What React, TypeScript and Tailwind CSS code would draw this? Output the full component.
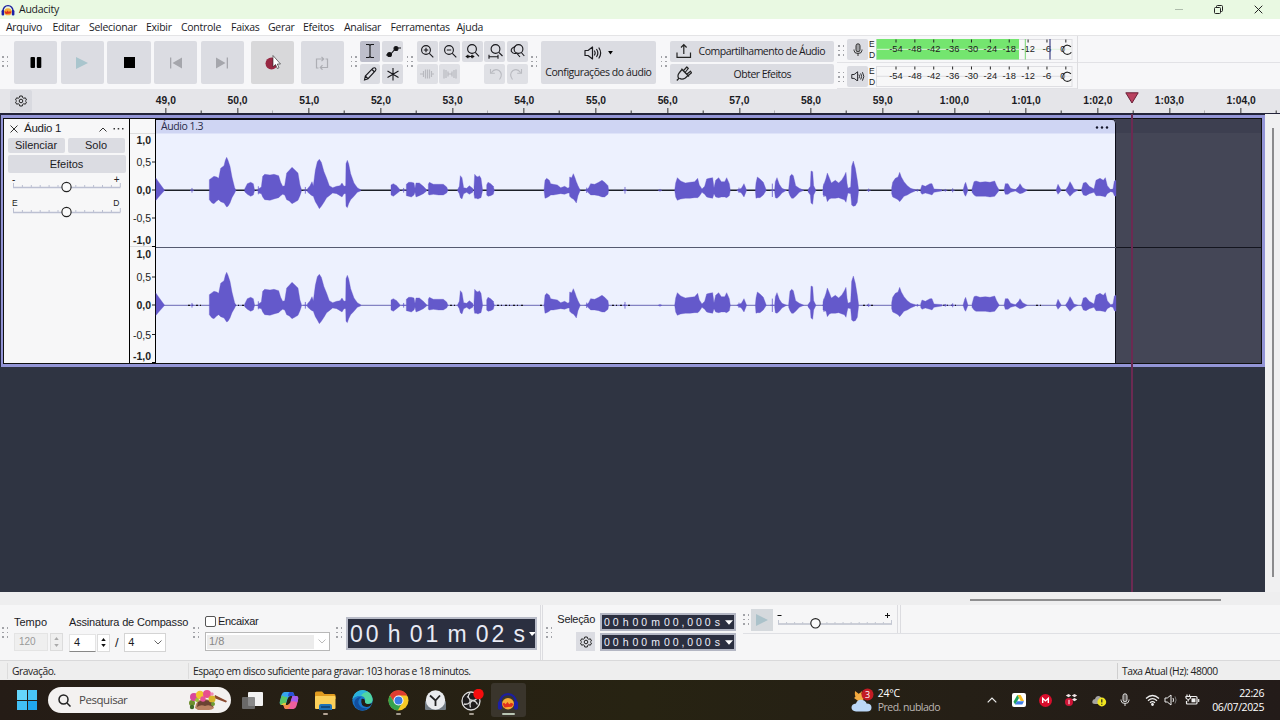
import React from "react";

type Pt = [number, number, number];
type Chunk = { origin: number; parts: Pt[][]; ticks: [number, number][] };

// Waveform envelopes: [position, peak above zero, peak below zero] in thirds of a pixel.
const CHUNKS: Chunk[] = [
  {
    origin: 150,
    parts: [
      [[18, 36, 30], [28, 22, 18], [44, 0, 0]],
      [[178, 32, 28], [186, 38, 38], [192, 42, 40], [200, 40, 32], [206, 36, 28], [212, 66, 34], [222, 74, 38], [226, 90, 44], [230, 99, 50], [234, 90, 48], [240, 72, 38], [246, 40, 22], [254, 8, 8], [258, 0, 0]],
      [[284, 4, 4], [292, 20, 12], [302, 24, 18], [310, 20, 14], [314, 0, 0]],
      [[325, 4, 8], [334, 10, 10], [338, 42, 20], [344, 48, 28], [360, 46, 30], [372, 48, 26], [386, 44, 22], [392, 24, 16], [398, 12, 12], [404, 14, 14], [410, 52, 28], [418, 60, 32], [426, 69, 40], [434, 62, 36], [444, 52, 30], [450, 16, 16], [454, 4, 4]],
      [[472, 4, 4], [480, 14, 12], [486, 26, 16], [490, 14, 18], [496, 60, 34], [502, 86, 44], [508, 93, 55], [514, 84, 48], [522, 56, 36], [530, 36, 22], [538, 14, 16], [548, 8, 8], [560, 12, 10], [570, 14, 16], [576, 22, 20], [582, 12, 10], [587, 14, 10], [588, 80, 48], [592, 90, 52], [596, 80, 40], [602, 50, 28], [612, 22, 18], [622, 8, 6], [632, 2, 2]],
      [[723, 16, 14], [730, 20, 18], [740, 14, 10], [750, 2, 2]],
      [[769, 18, 16], [776, 24, 18], [784, 24, 20], [792, 22, 14], [795, 6, 6], [798, 22, 20], [808, 22, 16], [820, 12, 10], [830, 2, 2]],
      [[835, 18, 12], [838, 24, 14], [850, 18, 12], [866, 18, 14], [880, 18, 14], [890, 10, 8], [894, 0, 0]],
      [[922, 0, 0], [928, 12, 10], [931, 44, 22], [936, 38, 26], [941, 8, 10], [950, 6, 6], [958, 14, 12], [968, 6, 6], [970, 0, 0]],
      [[972, 10, 12], [974, 48, 24], [979, 42, 24], [984, 40, 26], [988, 44, 24], [993, 36, 22], [998, 0, 0]],
      [[1010, 16, 14], [1014, 24, 18], [1022, 20, 16], [1030, 12, 12], [1033, 0, 0]],
    ],
    ticks: [[126, 7], [325, 12], [466, 10], [761, 7]],
  },
  {
    origin: 530,
    parts: [
      [[42, 0, 0], [45, 30, 24], [50, 36, 22], [58, 30, 18], [62, 20, 14], [70, 18, 14], [82, 16, 12], [92, 8, 10], [104, 12, 12], [114, 6, 8], [118, 10, 8], [119, 40, 18], [125, 38, 24], [130, 50, 26], [135, 38, 32], [139, 26, 38], [144, 14, 16], [151, 0, 0]],
      [[168, 0, 0], [176, 8, 8], [182, 20, 14], [194, 18, 14], [206, 24, 16], [216, 30, 20], [224, 24, 20], [234, 14, 12], [236, 0, 0]],
      [[434, 0, 0], [437, 22, 20], [442, 38, 30], [452, 28, 26], [466, 22, 24], [480, 24, 24], [494, 26, 22], [503, 36, 22], [508, 16, 18], [516, 4, 6], [524, 12, 12], [530, 34, 20], [538, 36, 22], [548, 38, 24], [552, 8, 10], [557, 30, 20], [566, 38, 22], [574, 26, 20], [584, 26, 20], [590, 38, 22], [598, 20, 16], [601, 0, 0]],
      [[620, 0, 0], [634, 6, 8], [642, 20, 20], [650, 0, 0]],
      [[676, 0, 0], [678, 22, 24], [682, 40, 22], [690, 34, 22], [700, 24, 14], [709, 0, 0]],
      [[734, 4, 6], [736, 26, 22], [741, 38, 24], [748, 18, 18], [756, 6, 8], [770, 0, 0]],
      [[776, 4, 6], [780, 42, 16], [785, 48, 24], [790, 44, 24], [797, 14, 18], [808, 6, 6], [822, 0, 0]],
      [[834, 2, 4], [841, 12, 14], [843, 58, 38], [848, 56, 42], [851, 14, 14], [858, 0, 0]],
      [[879, 10, 14], [888, 36, 18], [892, 52, 34], [898, 38, 26], [904, 22, 24], [916, 30, 24], [926, 22, 22], [936, 32, 26], [943, 44, 28], [948, 54, 36], [951, 22, 20], [954, 6, 8], [962, 10, 10], [965, 72, 44], [970, 88, 48], [976, 66, 46], [982, 30, 36], [986, 0, 0]],
    ],
    ticks: [[285, 10], [170, 8], [390, 4], [627, 8], [727, 20], [882, 20], [1016, 5]],
  },
  {
    origin: 880,
    parts: [
      [[35, 8, 10], [38, 24, 20], [46, 36, 24], [54, 40, 28], [59, 54, 34], [64, 40, 28], [72, 26, 18], [82, 14, 14], [92, 6, 8], [106, 2, 2]],
      [[122, 4, 6], [126, 16, 12], [136, 12, 8], [150, 20, 12], [156, 20, 14], [162, 4, 6], [186, 2, 2]],
      [[249, 0, 0], [254, 18, 14], [257, 24, 18], [264, 0, 0]],
      [[276, 4, 6], [282, 26, 14], [288, 28, 18], [300, 24, 18], [316, 26, 18], [330, 24, 20], [344, 28, 18], [350, 14, 10], [358, 0, 0]],
      [[372, 0, 0], [376, 20, 12], [384, 20, 12], [392, 6, 6], [406, 2, 2], [416, 12, 8], [420, 20, 10], [428, 8, 8], [442, 0, 0]],
      [[528, 0, 0], [534, 18, 12], [544, 0, 0]],
      [[556, 0, 0], [564, 12, 10], [570, 26, 18], [576, 16, 12], [582, 4, 6], [594, 0, 0]],
      [[604, 0, 0], [610, 22, 14], [618, 24, 16], [628, 12, 10], [642, 4, 6], [648, 30, 16], [660, 36, 16], [670, 30, 18], [676, 38, 20], [682, 14, 10], [692, 2, 4], [699, 4, 6], [703, 28, 16], [708, 30, 18]],
    ],
    ticks: [[218, 6], [196, 4], [112, 4]],
  },
];

const GRIP = ["a", "b", "c"];
const TIMES = ["49,0", "50,0", "51,0", "52,0", "53,0", "54,0", "55,0", "56,0", "57,0", "58,0", "59,0", "1:00,0", "1:01,0", "1:02,0", "1:03,0", "1:04,0"];
const DB = [-54, -48, -42, -36, -30, -24, -18, -12, -6, 0];

function Grip({ className = "" }: { className?: string }) {
  return (
    <div className={`flex w-[6px] shrink-0 flex-col gap-[3px] ${className}`}>
      {GRIP.map((k) => (
        <div key={k} className="flex justify-between">
          <i className="size-[1.5px] bg-[#a2a3a8]" />
          <i className="size-[1.5px] bg-[#a2a3a8]" />
        </div>
      ))}
    </div>
  );
}

function Big({ children, className = "bg-[#dbdce2]" }: { children: React.ReactNode; className?: string }) {
  return <div className={`flex h-[43px] w-[43.4px] shrink-0 items-center justify-center rounded-[2px] ${className}`}>{children}</div>;
}

function Tool({ children, active, off }: { children?: React.ReactNode; active?: boolean; off?: boolean }) {
  return (
    <div className={`flex h-[20.5px] w-[20.7px] items-center justify-center rounded-[2px] ${active ? "bg-[#bdbecb]" : off ? "bg-[#dfe0e5]" : "bg-[#dbdce2]"}`}>
      <svg width="20" height="20" viewBox="0 0 20 20" fill="none" stroke={off ? "#b9bac0" : "#17171b"} strokeWidth="1.1">{children}</svg>
    </div>
  );
}

function Gear({ size = 12 }: { size?: number }) {
  return (
    <svg width={size} height={size} viewBox="0 0 24 24" fill="none" stroke="#222" strokeWidth="2" strokeLinejoin="round">
      <path d="M9.500 2h5l.8 3.200 2.200 1.300 3.200-.9 2.300 4.300L20.700 12l2.300 2.200-2.300 4.200-3.200-.9-2.200 1.300-.8 3.200h-5l-.8-3.200-2.200-1.300-3.200.9L1 14.200 3.300 12 1 9.900l2.300-4.300 3.200.9 2.200-1.300z" />
      <circle cx="12" cy="12" r="3.600" />
    </svg>
  );
}

function Speaker({ w, stroke = "#1c1c20" }: { w: number; stroke?: string }) {
  return (
    <svg width={w} height={(w * 14) / 18} viewBox="0 0 18 14" fill="none" stroke={stroke} strokeWidth="1.200" strokeLinejoin="round">
      <path d="M1 4.500h3L8.500 1v12L4 9.500H1z" />
      <path d="M10.500 5q1.300 2 0 4M12.700 3.500q2.300 3.500 0 7M15 2q3.300 5 0 10" strokeLinecap="round" />
    </svg>
  );
}

function Mic({ stroke = "#333" }: { stroke?: string }) {
  return (
    <svg width="10" height="14" viewBox="0 0 10 14" fill="none" stroke={stroke} strokeWidth="1">
      <rect x="3" y=".8" width="4" height="8" rx="2" fill={stroke} fillOpacity=".35" />
      <path d="M1 6.500v.8q0 3.200 4 3.200t4-3.200v-.8M5 10.500V13" />
    </svg>
  );
}

function Meter({ live }: { live?: boolean }) {
  return (
    <svg width="200" height="22" viewBox="874 0 200 22" className="shrink-0 font-['Liberation_Sans',sans-serif]">
      <rect x="876.500" y=".5" width="195.500" height="20" fill="#f7f7f8" stroke="#dedee2" />
      {live && <rect x="876.500" y="0" width="142.500" height="20.500" fill="#74e56f" />}
      <path d="M877 10.300H1071" stroke={live ? "#dff3de" : "#dcdce0"} />
      {DB.map((d, i) => {
        const x = 896 + i * 18.87;
        return (
          <g key={d}>
            <path d={`M${x} .5v3`} stroke="#222" />
            <text x={x - (d === 0 ? 3 : 0)} y="13.200" fontSize="9.800" textAnchor="middle" fill="#1c1c1c" textLength={d === 0 ? 5 : d === -6 ? 9 : 13.500} lengthAdjust="spacingAndGlyphs">{d}</text>
          </g>
        );
      })}
      {live && <path d="M1025.300 0v20.500" stroke="#74d572" />}
      {live && <path d="M1050 0v20.500" stroke="#50528f" strokeWidth="1.300" />}
      <path d="M1070.900 7.800a4.600 4.600 0 1 0 .4 5.400" fill="#f7f7f8" fillOpacity=".4" stroke="#222" strokeWidth="1.100" />
    </svg>
  );
}

function Channel({ y, dark }: { y: number; dark?: boolean }) {
  return (
    <g>
      <path d={`M156 ${y}H1116`} stroke={dark ? "#1c2028" : "#6968b4"} strokeWidth={dark ? 1.4 : 1} />
      {!dark && <path d={`M188 ${y}h14M234 ${y}h12M450 ${y}h8M497 ${y}h28M540 ${y}h6M612 ${y}h20M863 ${y}h10M943 ${y}h16M1036 ${y}h6`} stroke="#15151d" strokeWidth="1.300" strokeDasharray="2 2 1 3" />}
      {CHUNKS.map((c) => (
        <g key={c.origin} transform={`translate(${c.origin} ${y}) scale(0.33333)`} fill="#6459cb" stroke="#6459cb">
          {c.parts.map((p) => (
            <path key={p[0][0]} strokeWidth="1" d={`M${p.map(([x, u]) => `${x} ${-u}`).join("L")}L${[...p].reverse().map(([x, , d]) => `${x} ${d}`).join("L")}Z`} />
          ))}
          {c.ticks.map(([x, h]) => (
            <path key={x} strokeWidth="2.500" d={`M${x} ${-h}V${h}M${x - 6} 0h12`} />
          ))}
        </g>
      ))}
    </g>
  );
}

const AXIS: [string, number, boolean][] = [
  ["1,0", 140, true], ["0,5", 162.5, false], ["0,0", 190.5, true], ["-0,5", 218.5, false], ["-1,0", 240, true],
  ["1,0", 254.5, true], ["0,5", 277.5, false], ["0,0", 305.5, true], ["-0,5", 335, false], ["-1,0", 356.5, true],
];

function PanelSlider({ l, r, small }: { l: string; r: string; small?: boolean }) {
  return (
    <svg width="125" height="25" viewBox="4 0 125 25" className="block font-['Liberation_Sans',sans-serif]">
      <text x="12" y={small ? 7.2 : 8.5} fontSize={small ? 8.5 : 10} fill="#222">{l}</text>
      <text x="119.500" y={small ? 7.2 : 8.5} fontSize={small ? 8.5 : 10} textAnchor="end" fill="#222">{r}</text>
      <path d="M13 13.500H120.500" stroke="#bcc0d2" strokeWidth="1.300" />
      {[0, 1, 2, 3, 4, 5, 6, 7, 8, 9, 10, 11, 12].map((i) => (
        <path key={i} d={`M${13.5 + i * 8.9} 13V${i % 12 === 0 ? 9 : 11}`} stroke="#bcc0d2" />
      ))}
      <circle cx="66.500" cy="13" r="4.600" fill="#fafafa" stroke="#222" strokeWidth="1.100" />
    </svg>
  );
}

function TimeField() {
  return (
    <div className="flex h-[18px] w-[136px] items-center justify-between border-2 border-[#b4b7c4] bg-[#2b2f40] pr-[1px] pl-[2px] text-[10.500px] leading-none whitespace-pre text-[#eef0fa]">
      <span className="flex w-[116px] justify-between">
        {"00 h 00 m 00,000 s".split(" ").map((t, i) => (
          <span key={i} className="tracking-[2.900px] last:tracking-normal">{t}</span>
        ))}
      </span>
      <svg width="8" height="5" viewBox="0 0 8 5"><path d="M0 .3h8L4 4.700z" fill="#fff" /></svg>
    </div>
  );
}

function Headphones({ w }: { w: number }) {
  return (
    <svg width={w} height={w} viewBox="0 0 24 24" fill="none">
      <path d="M3.500 15C2 1 22 1 20.500 15" stroke="#1c1f9e" strokeWidth="2.400" />
      <rect x="1" y="12" width="4.500" height="9.500" rx="2" fill="#1d20a6" />
      <rect x="18.500" y="12" width="4.500" height="9.500" rx="2" fill="#1d20a6" />
      <ellipse cx="12" cy="15" rx="6.500" ry="6.200" fill="#f5ab35" />
      <path d="M5.800 15l2-1 1.600 1.500 2-2.500 2 2.500 1.800-1.500 3 1.200-2 3-8 .8z" fill="#e0301e" />
    </svg>
  );
}

function Spin({ off }: { off?: boolean }) {
  return (
    <div className={`flex h-[18px] w-[12.5px] flex-col items-center justify-evenly border border-[#dcdcdc] ${off ? "bg-[#efefef]" : "bg-white"}`}>
      <svg width="5" height="3" viewBox="0 0 6 4"><path d="M0 4h6L3 0z" fill={off ? "#aaa" : "#111"} /></svg>
      <svg width="5" height="3" viewBox="0 0 6 4"><path d="M0 0h6L3 4z" fill={off ? "#aaa" : "#111"} /></svg>
    </div>
  );
}

function Chevron({ color = "#666" }: { color?: string }) {
  return <svg width="8" height="5" viewBox="0 0 8 5" fill="none" stroke={color}><path d="M.5.5L4 4 7.500.5" /></svg>;
}

function TaskCell({ children, active, dot }: { children: React.ReactNode; active?: boolean; dot?: string }) {
  return (
    <div className={`flex h-[34px] w-[34.600px] shrink-0 flex-col items-center rounded-[3px] pt-[7px] ${active ? "bg-[#3a352c]" : ""}`}>
      <div className="flex h-[21px] items-center">{children}</div>
      {dot && <i className={`mt-[2px] h-[2px] rounded-full ${dot}`} />}
    </div>
  );
}

const MENU: [string, string][] = [
  ["Arquivo", "w-[46.500px]"], ["Editar", "w-[36.500px]"], ["Selecionar", "w-[57px]"], ["Exibir", "w-[35px]"], ["Controle", "w-[50px]"], ["Faixas", "w-[37px]"],
  ["Gerar", "w-[35px]"], ["Efeitos", "w-[41px]"], ["Analisar", "w-[46.500px]"], ["Ferramentas", "w-[66px]"], ["Ajuda", "w-[40px]"],
];

export default function App() {
  return (
    <div className="flex h-[720px] w-[1280px] flex-col overflow-hidden bg-[#f5f5f6] font-['Open_Sans','Noto_Sans',sans-serif] text-[11px] leading-none text-[#1b1b1f]">
      <header className="flex h-[19px] shrink-0 items-center bg-[#e9f9e2] pl-[1px]">
        <Headphones w={14} />
        <span className="ml-[4px] text-[10.500px] tracking-[-0.250px]">Audacity</span>
        <div className="mr-[17px] ml-auto flex items-center">
          <i className="mr-[31px] h-px w-[8px] bg-[#aebcab]" />
          <svg className="mr-[31px]" width="9" height="9" viewBox="0 0 9 9" fill="none" stroke="#222"><rect x=".5" y="2.500" width="6" height="6" rx="1" /><path d="M2.500 2.500V1.500q0-1 1-1h4q1 0 1 1v4q0 1-1 1h-1" /></svg>
          <svg width="9" height="9" viewBox="0 0 9 9" stroke="#222"><path d="M.7.7l7.600 7.600M8.300.7L.7 8.300" /></svg>
        </div>
      </header>

      <nav className="flex h-[16px] shrink-0 items-center bg-white pt-px pl-[6px] text-[10.500px] tracking-[-0.280px]">
        {MENU.map(([t, w]) => <span key={t} className={`shrink-0 whitespace-nowrap ${w}`}>{t}</span>)}
      </nav>

      <section className="flex h-[54px] shrink-0 border-t border-[#e4e4e6] bg-[#f7f7f9]">
        <div className="flex w-[834px] shrink-0 items-start pt-[5px] pl-[2px]">
          <Grip className="mt-[15px] mr-[6px]" />
          <Big><svg width="12" height="11" viewBox="0 0 12 11"><rect x=".5" width="4.500" height="11" rx="1" /><rect x="6.800" width="4.500" height="11" rx="1" /></svg></Big>
          <Big className="ml-[3.300px] bg-[#dbdce2]"><svg width="12" height="12" viewBox="0 0 12 12"><path d="M0 0l12 6-12 6z" fill="#a9c5cd" /></svg></Big>
          <Big className="ml-[3.300px] bg-[#dbdce2]"><i className="size-[11px] bg-black" /></Big>
          <Big className="ml-[3.300px] bg-[#dbdce2]"><svg width="12" height="12" viewBox="0 0 12 12" fill="#a5a6ac"><path d="M0 .5h1.300v11H0zM12 .5v11L2.500 6z" /></svg></Big>
          <Big className="ml-[3.300px] bg-[#dbdce2]"><svg width="12" height="12" viewBox="0 0 12 12" fill="#a5a6ac"><path d="M10.700.5H12v11h-1.300zM0 .5v11L9.500 6z" /></svg></Big>
          <Big className="ml-[6.600px] bg-[#d8d8da]">
            <svg width="18" height="16" viewBox="0 0 18 16" className="ml-[3px]"><circle cx="6.500" cy="8.500" r="6" fill="#972842" /><path d="M8 .5v11.300l2.500-2.300 1.800 4 1.700-.8-1.700-3.700h3.200z" fill="#fff" stroke="#222" strokeWidth=".6" /></svg>
          </Big>
          <Big className="ml-[6.600px] bg-[#dbdce2]">
            <svg width="14" height="14" viewBox="0 0 14 14" fill="none" stroke="#adaeb4" strokeWidth="1.200"><path d="M3.500 12H1.500V3h7M6.500.8L8.700 3 6.500 5.200M10.500 3h2v8.500h-7M7.500 9.200l-2.200 2.300 2.200 2.200" /></svg>
          </Big>
          <Grip className="mt-[15px] ml-[6.500px]" />
          <div className="ml-[3px] grid grid-cols-2 gap-[2px]">
            <Tool active><path d="M6 3.500h3l1 1 1-1h3M6 16.500h3l1-1 1 1h3M10 4.500v11" /></Tool>
            <Tool><path d="M3 14h4l6-7h5" /><circle cx="6.500" cy="13.500" r="2" fill="#111" /><circle cx="13" cy="7.500" r="2" fill="#111" /></Tool>
            <Tool><path d="M4.500 16l.8-4L13 4.200q1.300-1 2.400 0 1.100 1.200.1 2.500L8 14.700zM12 5.500l2.500 2.500M5.300 12L8 14.700" /></Tool>
            <Tool><path d="M10 4v12.500M4.500 7l11 6.500M15.500 7l-11 6.500" /></Tool>
          </div>
          <Grip className="mt-[15px] ml-[4px]" />
          <div className="ml-[4px] grid grid-cols-5 gap-x-[1.800px] gap-y-[2px]">
            <Tool><circle cx="9" cy="9" r="4.400" /><path d="M12.300 12.300l4 4M6.800 9h4.400M9 6.800v4.400" /></Tool>
            <Tool><circle cx="9" cy="9" r="4.400" /><path d="M12.300 12.300l4 4M6.800 9h4.400" /></Tool>
            <Tool><circle cx="10" cy="8" r="4.400" /><path d="M13.300 11.300l3.700 4M4 15.500h8" /><path d="M3.500 15.500l2.500-1.700v3.400zM8 15.500l-1.500-1.700v3.400zM8.500 15.500l1.500-1.700v3.400zM12.500 15.500l-2.300-1.700v3.400z" fill="#111" strokeWidth=".2" /></Tool>
            <Tool><circle cx="10.500" cy="8" r="4.400" /><path d="M13.800 11.300l3.700 3.700M4 15.800h9M4 13.800v4M13 13.800v4" /></Tool>
            <Tool><circle cx="11.500" cy="8" r="4.400" /><path d="M14.300 11.500l3 3.500M8.500 5.500q-5 1.500-4.200 4.800 1.700 3.200 5.500 1.700M10 12.500l3 3.500" /></Tool>
            <Tool off><path d="M3 10h3M14 10h3M6.500 7v6M8.500 5.500v9M10.500 5.500v9M12.500 5.500v9M14.500 7v6" strokeWidth="1.200" /></Tool>
            <Tool off><path d="M4 5.500v9M6 6v8M8 7.500v5M8 10h4M12 7.500v5M14 6v8M16 5.500v9" strokeWidth="1.200" /></Tool>
            <span />
            <Tool off><path d="M6.500 8.500q3-4.500 7.500-2 4.500 3.500.5 9M5.500 5v4.300h4.300" /></Tool>
            <Tool off><path d="M13.500 8.500q-3-4.500-7.500-2-4.500 3.500-.5 9M14.500 5v4.300h-4.300" /></Tool>
          </div>
          <Grip className="mt-[15px] ml-[3.500px]" />
          <div className="ml-[3.500px] flex h-[43px] w-[115.500px] shrink-0 flex-col items-center rounded-[2px] bg-[#dbdce2] pt-[5px]">
            <div className="flex items-center gap-[6px]"><Speaker w={18} /><svg width="5" height="4" viewBox="0 0 6 5"><path d="M0 0h6L3 4.500z" /></svg></div>
            <span className="mt-[7px] text-[10.500px] tracking-[-0.440px] whitespace-nowrap">Configurações do áudio</span>
          </div>
          <Grip className="mt-[15px] ml-[4.500px]" />
          <div className="ml-[3px] flex flex-col gap-[2px]">
            <div className="flex h-[20.500px] w-[164px] items-center rounded-[2px] bg-[#dbdce2] pl-[6px]">
              <svg className="shrink-0" width="16" height="16" viewBox="0 0 16 16" fill="none" stroke="#222" strokeWidth="1.200"><path d="M1 9.500v4.800h13.500V9.500M7.800 11V2M5 4.500L7.800 1.700l2.800 2.800" /></svg>
              <span className="ml-[7px] text-[10.500px] tracking-[-0.500px] whitespace-nowrap">Compartilhamento de Áudio</span>
            </div>
            <div className="flex h-[20.500px] w-[164px] items-center rounded-[2px] bg-[#dbdce2] pl-[6px]">
              <svg className="shrink-0" width="16" height="16" viewBox="0 0 16 16" fill="none" stroke="#222" strokeWidth="1.200" strokeLinejoin="round"><path d="M.8 14.500l2-2q-2-3 .7-6L6 3.500l6 6-2.700 2.500q-3.300 2-5.800.3M5.500 2.700l7.500 7.800M7.500 4.700L10.800 1l1.500 1.500L9.500 6M11 8l3.500-2.800 1 1.600L12.300 9.500" /></svg>
              <span className="ml-[42px] text-[10.500px] tracking-[-0.520px] whitespace-nowrap">Obter Efeitos</span>
            </div>
          </div>
        </div>
        <div className="ml-[3px] flex flex-col border-r border-[#dddde0]">
          {[true, false].map((live) => (
            <div key={String(live)} className="flex h-[26.500px] w-[240px] items-start border-b border-[#e2e2e6] pt-[3px] pl-[1px]">
              <Grip className="mt-[6px]" />
              <div className="ml-[3px] flex size-[21px] shrink-0 items-center justify-center rounded-[2px] bg-[#dbdce2]">{live ? <Mic /> : <Speaker w={14} />}</div>
              <div className="ml-[1px] flex w-[5px] shrink-0 flex-col font-['Liberation_Sans',sans-serif] text-[8.500px] leading-[11px] text-[#222]"><span>E</span><span>D</span></div>
              <Meter live={live} />
            </div>
          ))}
        </div>
        <div className="flex flex-1 flex-col"><i className="h-[27px] border-b border-[#e2e2e6]" /></div>
      </section>

      <section className="flex h-[25px] shrink-0 border-b border-[#23243a] bg-[#e5e5e9]">
        <div className="mt-[1px] ml-[10px] flex h-[22px] w-[22px] shrink-0 items-center justify-center rounded-[2px] bg-[#d9dae0]"><Gear size={12} /></div>
        <div className="ml-[98px] flex">
          {TIMES.map((t) => (
            <div key={t} className="flex h-full w-[71.700px] shrink-0 flex-col items-center justify-between pt-[7px] font-['Liberation_Sans',sans-serif] text-[10.300px] font-bold">
              <span>{t}</span>
              <svg width="71.700" height="5" viewBox="0 0 71.700 5" stroke="#333"><path d="M35.850 0v5M71.200 2.500V5" /></svg>
            </div>
          ))}
        </div>
      </section>

      <main className="flex h-[478px] shrink-0">
        <div className="relative flex w-[1265px] flex-col bg-[#2f3442]">
          <div className="flex h-[253px] shrink-0 border-t border-l border-[#23243a] bg-[#9395d6] pt-[3px] pr-[3px] pb-[3px] pl-[2px]">
            <div className="flex w-[1259px] border border-[#111] bg-[#f7f7f8]">
              <div className="flex w-[126px] shrink-0 flex-col border-r border-black pt-px font-['Liberation_Sans',sans-serif]">
                <div className="flex h-[18px] items-center pr-[5px] pl-[6px] text-[11.500px]">
                  <svg width="8" height="8" viewBox="0 0 8 8" stroke="#333"><path d="M.5.5l7 7M7.500.5l-7 7" /></svg>
                  <span className="mr-auto ml-[6px] tracking-[-0.250px]">Áudio 1</span>
                  <svg width="8" height="5" viewBox="0 0 8 5" fill="none" stroke="#333"><path d="M.5 4.500L4 1l3.500 3.500" /></svg>
                  <svg className="ml-[6px]" width="11" height="2" viewBox="0 0 11 2" fill="#333"><rect width="1.500" height="1.500" x=".5" /><rect width="1.500" height="1.500" x="4.700" /><rect width="1.500" height="1.500" x="9" /></svg>
                </div>
                <div className="flex gap-[3px] px-[3.500px] text-[11px]">
                  <div className="flex h-[15px] w-[57px] items-center justify-center rounded-[2px] bg-[#dbdce2]">Silenciar</div>
                  <div className="flex h-[15px] w-[57px] items-center justify-center rounded-[2px] bg-[#dbdce2]">Solo</div>
                </div>
                <div className="mx-[3.500px] mt-[2px] mb-[1px] flex h-[18px] items-center justify-center rounded-[2px] bg-[#dbdce2] text-[11px]">Efeitos</div>
                <PanelSlider l="-" r="+" />
                <PanelSlider l="E" r="D" small />
              </div>
              <svg width="1131" height="244" viewBox="130 119 1131 244" className="block shrink-0 font-['Liberation_Sans',sans-serif]">
                <rect x="130" y="119" width="26" height="244" fill="#f8f8f9" />
                <path d="M130 133.500h25M130 246.500h25" stroke="#ddd" />
                {AXIS.map(([t, y, b]) => (
                  <g key={y}>
                    <text x="151" y={y + 3.5} fontSize="10.500" textAnchor="end" fontWeight={b ? 700 : 400} fill="#222">{t}</text>
                    <path d={`M152 ${y - 0.5}h4`} stroke="#222" opacity={Math.abs(y - 190) > 45 && b && y !== 305.5 ? 0 : 1} />
                  </g>
                ))}
                <path d="M155.500 119V363M152 246.500h4M152 362.500h4" stroke="#000" />
                <rect x="156" y="119" width="1106" height="244" fill="#444656" />
                <path d="M156 119h1106v14H156z" fill="#3d3f50" />
                <path d="M156 120h956q4 0 4 4v239H156z" fill="#edf1fe" />
                <path d="M156 120h956q4 0 4 4v9.500H156z" fill="#cfd5f3" />
                <path d="M156 119.500H1112q3.500 0 3.500 4.500V363" fill="none" stroke="#0c0d18" />
                <path d="M156 247.500H1116" stroke="#555a70" />
                <path d="M1116 247.500H1261" stroke="#14151f" />
                <text x="161" y="130" fontSize="10.500" fill="#2a2c48" textLength="42.500" className="font-['Open_Sans',sans-serif]">Áudio 1.3</text>
                <g fill="#14152a"><circle cx="1097" cy="127.500" r="1.200" /><circle cx="1102" cy="127.500" r="1.200" /><circle cx="1107" cy="127.500" r="1.200" /></g>
                <Channel y={190.3} dark />
                <Channel y={305.3} />
              </svg>
            </div>
          </div>
          <div className="absolute top-0 left-[1131px] h-[478px] w-[2px] bg-[#6c2a52]" />
          <svg className="absolute -top-[22px] left-[1125px]" width="14" height="12" viewBox="0 0 14 12"><path d="M.8.8h12.400L7 11z" fill="#b9415f" stroke="#6a2038" /></svg>
        </div>
        <div className="flex w-[15px] justify-center bg-[#f0f0f1] pt-[14px]"><i className="h-[449px] w-[2px] bg-[#8b8b8d]" /></div>
      </main>

      <div className="flex h-[13px] shrink-0 items-center bg-[#eeeeef] pt-[3px] pl-[970px]"><i className="h-[2px] w-[251px] bg-[#8f8f90]" /></div>

      <section className="flex h-[56px] shrink-0 border-b border-[#d9d9da] bg-[#f6f6f7] font-['Liberation_Sans',sans-serif] text-[11px]">
        <Grip className="mt-[22px] ml-[2px]" />
        <div className="ml-[6px] flex w-[55px] flex-col pt-[11px]">
          <span className="text-[11px] leading-[12px]">Tempo</span>
          <div className="mt-[5px] flex gap-[2px] text-[#999]"><div className="flex h-[18px] w-[34px] items-center border border-[#e4e4e4] bg-[#efefef] pl-[4px] text-[10px]">120</div><Spin off /></div>
        </div>
        <div className="flex w-[124px] flex-col pt-[11px]">
          <span className="text-[11px] leading-[12px] tracking-[-0.170px] whitespace-nowrap">Assinatura de Compasso</span>
          <div className="mt-[5px] flex items-center">
            <div className="flex h-[18px] w-[27px] items-center border border-[#e4e4e4] border-b-[#888] bg-white pl-[4px]">4</div>
            <div className="ml-px"><Spin /></div>
            <span className="mx-[5.500px] text-[13px]">/</span>
            <div className="flex h-[19px] w-[42px] items-center justify-between border border-[#d4d4d4] bg-white pr-[3px] pl-[3px]">4<Chevron /></div>
          </div>
        </div>
        <Grip className="mt-[22px]" />
        <div className="ml-[6px] flex w-[125px] flex-col pt-[11px]">
          <div className="flex items-center gap-[2px] text-[11px] tracking-[-0.300px]"><i className="size-[11px] rounded-[2px] border border-[#555] bg-white" />Encaixar</div>
          <div className="mt-[5px] flex h-[19px] items-center justify-between border border-[#b8b8b8] bg-white pr-[3px] pl-[1px] text-[#888]"><span className="flex h-[14px] w-[107px] items-center bg-[#ececec] pl-[2px]">1/8</span><Chevron color="#bbb" /></div>
        </div>
        <Grip className="mt-[22px] ml-[6px]" />
        <div className="mt-[12px] ml-[4px] flex h-[33px] w-[191px] shrink-0 items-center border-2 border-[#b9bcc8] bg-[#2b2f40] pt-px pl-[2px] text-[23px] text-[#e9ebf5]">
          <span className="flex w-[175px] shrink-0 justify-between whitespace-nowrap">
            {"00 h 01 m 02 s".split(" ").map((t, i) => <span key={i} className={t.length > 1 ? "-mr-[3px] tracking-[3px]" : ""}>{t}</span>)}
          </span>
          <svg className="ml-[4px]" width="6" height="4" viewBox="0 0 6 4"><path d="M0 0h6v1L3 4z" fill="#fff" /></svg>
        </div>
        <div className="ml-[3px] h-full w-[3px] border-x border-[#dcdce0]" />
        <Grip className="mt-[22px] ml-[3px]" />
        <div className="ml-[6px] flex w-[37px] flex-col items-end pt-[8px]">
          <span className="text-[11px] leading-[12px] tracking-[-0.300px]">Seleção</span>
          <div className="mt-[7px] flex size-[19px] items-center justify-center bg-[#dbdce2]"><Gear size={12} /></div>
        </div>
        <div className="mt-[8px] ml-[5px] flex flex-col gap-[2px]"><TimeField /><TimeField /></div>
        <div className="ml-[7px] flex flex-1 flex-col">
          <div className="flex h-[29px] border-b border-[#dfe0e4]">
            <Grip className="mt-[9px]" />
            <div className="mt-[4px] ml-[2px] flex size-[22px] items-center justify-center bg-[#d5d9dd]"><svg width="12" height="12" viewBox="0 0 12 12"><path d="M0 0l12 6-12 6z" fill="#abc2ca" /></svg></div>
            <svg className="ml-[4px]" width="116" height="28" viewBox="777 605 116 28">
              <path d="M777.500 615.500h4M885 615.500h5M887.500 613v5" stroke="#111" />
              <path d="M778 624H892" stroke="#bcc0cc" strokeWidth="1.500" />
              {[0, 1, 2, 3, 4, 5, 6, 7, 8, 9, 10, 11, 12, 13, 14].map((i) => <path key={i} d={`M${778.5 + i * 8.07} 624v${i % 14 === 0 ? -4 : -2}`} stroke="#c3c7d2" />)}
              <circle cx="815.500" cy="623.300" r="4.700" fill="#fbfbfb" stroke="#222" strokeWidth="1.100" />
            </svg>
            <div className="ml-[4px] h-full w-[4px] border-x border-[#dcdce0]" />
          </div>
        </div>
      </section>

      <footer className="flex h-[19px] shrink-0 items-center bg-[#eeeeee] pt-px pl-[7px] text-[10.300px] tracking-[-0.470px] text-[#222]">
        <span className="flex h-[16px] w-[181px] shrink-0 items-center border-l border-[#dcdcdc] pl-[4px]">Gravação.</span>
        <span className="flex h-[16px] w-[929px] shrink-0 items-center border-l border-[#dcdcdc] pl-[4px]">Espaço em disco suficiente para gravar: 103 horas e 18 minutos.</span>
        <span className="flex h-[16px] items-center border-l border-[#cfcfcf] pl-[4px] whitespace-nowrap">Taxa Atual (Hz): 48000</span>
      </footer>

      <footer className="flex h-[40px] shrink-0 items-center bg-linear-to-r from-[#251c16] via-[#272312] to-[#231b19] text-white">
        <div className="ml-[17px] grid size-[20px] grid-cols-2 gap-px">
          <i className="bg-[#66d6fb]" /><i className="bg-[#49c5f7]" /><i className="bg-[#42c0f5]" /><i className="bg-[#20a7ee]" />
        </div>
        <div className="ml-[11px] flex h-[26px] w-[183px] items-center rounded-full bg-[#f3f1f0] pr-[2px] pl-[10px] text-[#4a4746]">
          <svg width="13" height="13" viewBox="0 0 13 13" fill="none" stroke="#222" strokeWidth="1.500"><circle cx="5.500" cy="5.500" r="4.500" /><path d="M9 9l3.500 3.500" /></svg>
          <span className="ml-[8px] text-[11.500px] tracking-[-0.450px]">Pesquisar</span>
          <svg className="ml-auto" width="41" height="22" viewBox="0 0 41 22">
            <path d="M7 19q1-9 9-9t10 9q-2 2-5 2H10z" fill="#b98262" />
            <path d="M10 13q7-4 14 0l1 5q-4-3-8-1-4-2-8 1z" fill="#6a4332" />
            <path d="M27 6l12 6-1 1.500L26 9z" fill="#8a4a30" />
            <circle cx="4" cy="14" r="3" fill="#6e8f2e" /><circle cx="6" cy="8" r="4" fill="#d9479a" /><circle cx="12" cy="6" r="4.200" fill="#f0c62e" /><circle cx="19" cy="5" r="4" fill="#e84f8d" /><circle cx="24" cy="10" r="3.500" fill="#d8b52a" /><circle cx="15" cy="10" r="2.700" fill="#e6529b" /><circle cx="4" cy="18" r="2.200" fill="#3f6b27" /><circle cx="25" cy="15" r="2" fill="#6f9b33" /><circle cx="9" cy="11" r="2" fill="#9fc13c" /><circle cx="24" cy="5" r="1.700" fill="#f18ab6" />
          </svg>
        </div>
        <div className="ml-[4px] flex gap-[2px]">
          <TaskCell><svg width="21" height="19" viewBox="0 0 21 19"><rect x="6" y="1" width="15" height="14" rx="1" fill="#f2f2f2" /><rect x="0" y="6" width="13" height="12" rx="1" fill="#777" fillOpacity=".85" /></svg></TaskCell>
          <TaskCell>
            <svg width="20" height="19" viewBox="0 0 20 19"><path d="M5.500 1h7.500q1.500 0 2 2l.5 2h-4q-2 0-3 3l-2 6H3q-3 0-2-4l1.500-6Q3.500 1 5.500 1z" fill="#36a5ef" /><path d="M11 1h2q1.500 0 2 2l.6 2h-4.100L9 5q.5-4 2-4z" fill="#2a50d8" /><path d="M1 10l1.800-5.500Q5.500 6 8.500 6L6.500 14H3q-3 0-2-4z" fill="#5ac765" /><path d="M2 13.800q1.500-2 5.200-2L6.500 14l-1 2.500L4.500 14H3z" fill="#e8c83a" /><path d="M14.500 18H7q-1.500 0-2-2l-.5-2h4q2 0 3-3l2-6H17q3 0 2 4l-1.500 6q-1 3-3 3z" fill="#ec5f9f" /><path d="M13.500 5H17q3 0 2 4l-.6 2.500q-3-2-6.800-1z" fill="#a45cf0" /><path d="M4.500 14h4q1.500 0 2.500-2 1 4-2.500 6H7q-1.500 0-2-2z" fill="#f58a4c" /></svg>
          </TaskCell>
          <TaskCell dot="w-[5px] bg-[#b5a596]"><svg width="21" height="19" viewBox="0 0 21 19"><path d="M0 2q0-1.500 1.500-1.500H7L9.500 3H19q1.500 0 1.500 1.500V8H0z" fill="#e09b20" /><rect y="5" width="20.500" height="13" rx="1" fill="#fbd05a" /><path d="M4 19v-4q0-2 2-2h9q2 0 2 2v4z" fill="#1f72b8" /><path d="M6 16h9" stroke="#123e6b" strokeWidth="1.500" /></svg></TaskCell>
          <TaskCell>
            <svg width="21" height="21" viewBox="0 0 21 21"><circle cx="10.500" cy="10.500" r="10.200" fill="#1976c9" /><path d="M.5 9Q3 0 11 .3q8.500.7 9.700 8.700.2 5-5.200 5-3.500-.2-2.500-2.200Q14 7 9.500 6 4 5 .5 9z" fill="#50d5a2" /><path d="M.5 9Q3 0 11 .3q3 .2 5 1.700-5 0-7 4Q4 5 .5 9z" fill="#2ab2df" /><path d="M9 7q-4 3-2 7.500 3 5 9.500 3.500-5 4-10 1.500-5-3.500-4-8Q4 7 9 7z" fill="#124f9e" /><path d="M9.500 9q3-1 3.500 2-.5 2.500 2.500 3 3 .3 4.500-1-1.500 4-5.500 4Q8 16 9.500 9z" fill="#251d15" /></svg>
          </TaskCell>
          <TaskCell dot="w-[5px] bg-[#a39b8f]"><svg width="21" height="21" viewBox="0 0 21 21"><circle cx="10.500" cy="10.500" r="10" fill="#f6c927" /><path d="M1.800 5.500a10 10 0 0 1 17.500 0h-8.800l-3.900 7.200z" fill="#df3d31" /><path d="M1.800 5.500a10 10 0 0 0 8 15l4-7-3.300-.5-4.500-1z" fill="#35a24d" /><circle cx="10.500" cy="10.500" r="5" fill="#fff" /><circle cx="10.500" cy="10.500" r="4" fill="#3b7de2" /></svg></TaskCell>
          <TaskCell><svg width="21" height="21" viewBox="0 0 21 21"><rect y="11" width="21" height="9" rx="1" fill="#727b83" /><circle cx="10.500" cy="10" r="9.700" fill="#e9ebee" /><path d="M5 5.500l5.500 5 4.500-5M10.500 10.500V16" fill="none" stroke="#222" strokeWidth="1.800" /></svg></TaskCell>
          <TaskCell dot="w-[5px] bg-[#a39b8f]"><svg width="24" height="23" viewBox="0 0 24 23" fill="none"><circle cx="11" cy="12" r="9" fill="#1e1c1c" stroke="#ddd" strokeWidth="1.300" /><path d="M10 4q-3.500 3.500 0 6.500 3.500 2 6.500-.5M17.500 15.500q-2-4.500-5.500-3.500-3 2-1.500 6.500M4 15q4 1 6-2 .5-3.500-3-5.500" stroke="#d8d8d8" strokeWidth="1.300" /><circle cx="18.500" cy="5" r="5.200" fill="#f60d0d" /></svg></TaskCell>
          <TaskCell active dot="w-[13px] bg-[#b9c5b3]"><Headphones w={22} /></TaskCell>
        </div>
        <div className="ml-[325px] flex w-[130px] items-center">
          <svg width="23" height="25" viewBox="0 0 23 25"><path d="M4 3q-1 6 3 9l4-4q-1-2 0-5l-3 3z" fill="#f2a63a" /><path d="M3 10l6-5 5 4-4 6z" fill="#f2ad45" /><path d="M5 23.500q-4.500-.5-4.500-4t4.500-4q1.500-4.500 6.500-3.500 3.500 1 4 3.500 5 0 5 4t-4.500 4z" fill="#bcd8f8" /><circle cx="16.500" cy="6.500" r="6" fill="#c21c24" /><text x="16.500" y="10" fontSize="9" textAnchor="middle" fill="#fff">3</text></svg>
          <div className="ml-[4px] flex flex-col gap-[3px] text-[10.500px] tracking-[-0.250px] whitespace-nowrap"><span>24°C</span><span className="tracking-[-0.520px] text-[#bdb7b4]">Pred. nublado</span></div>
        </div>
        <div className="ml-[6px] flex items-center">
          <svg width="10" height="6" viewBox="0 0 10 6" fill="none" stroke="#eee" strokeWidth="1.200"><path d="M.7 5.300L5 1l4.300 4.300" /></svg>
          <svg className="ml-[15px]" width="14" height="14" viewBox="0 0 14 14"><rect width="14" height="14" rx="2" fill="#fff" /><path d="M5.300 2h3.400l3.300 6H8.700z" fill="#f6bd26" /><path d="M5.300 2L1.500 8.800 3.200 11.500 7 5z" fill="#1da15a" /><path d="M3.200 11.500L5 8.300h7l-1.700 3.200z" fill="#3f7ee8" /></svg>
          <svg className="ml-[13px]" width="13" height="13" viewBox="0 0 13 13"><circle cx="6.500" cy="6.500" r="6.500" fill="#d80e2c" /><path d="M3.700 9V4.300l2.800 2.600 2.800-2.600V9" fill="none" stroke="#fff" strokeWidth="1.400" /></svg>
          <svg className="ml-[13px]" width="13" height="14" viewBox="0 0 13 14"><path d="M3.500 1l2.700 1.600-2.700 1.700L.8 2.600zM9.500 1l2.700 1.600-2.700 1.700-2.700-1.700zM9.500 5l2.700 1.600-2.700 1.700-2.700-1.700z" fill="#f1e4e6" /><circle cx="4" cy="9" r="4" fill="#cf1437" /><path d="M4 6.800v4.400" stroke="#fff" /></svg>
          <svg className="ml-[14px]" width="15" height="14" viewBox="0 0 15 14"><path d="M3 11Q0 11 .3 8.500.5 6 3 6q1-3.500 4-3 2 .5 3 3v5z" fill="#a4a3a1" /><circle cx="9.800" cy="9" r="4.400" fill="#f0e520" /><path d="M9.800 6.300v3.200M9.800 10.700v1" stroke="#222" strokeWidth="1.200" /></svg>
          <span className="ml-[13px]"><Mic stroke="#ddd" /></span>
          <svg className="ml-[15px]" width="15" height="12" viewBox="0 0 15 12" fill="none" stroke="#eee" strokeWidth="1.200"><path d="M1 4.500q6.500-6 13 0M3 6.700q4.500-4 9 0M5 8.800q2.500-2.200 5 0" /><circle cx="7.500" cy="10.500" r=".8" fill="#eee" /></svg>
          <svg className="ml-[4px]" width="14" height="12" viewBox="0 0 14 12" fill="none" stroke="#eee"><path d="M1 4h2.300L7 1v10L3.300 8H1z" /><path d="M9 4q1 2 0 4" /><path d="M11 2.500q2.200 3.500 0 7" stroke="#777" /></svg>
          <svg className="ml-[7px]" width="15" height="12" viewBox="0 0 15 12" fill="none" stroke="#eee" strokeWidth="1.200"><path d="M5.500 2.500H11q1 0 1 1V9q0 1-1 1H2.500q-1 0-1-1V7" /><path d="M13.700 5v3" /><path d="M6.500 4.300h4v4h-4z" fill="#eee" stroke="none" /><path d="M2 .5v2M4.500 .5v2M1 2.500h4.500v1.500q-2.200 3-4.500 0zM3.200 5v2.500" /></svg>
        </div>
        <div className="mr-[16px] ml-auto flex flex-col items-end gap-[3px] text-[10.500px] tracking-[-0.400px]"><span>22:26</span><span>06/07/2025</span></div>
      </footer>
    </div>
  );
}
